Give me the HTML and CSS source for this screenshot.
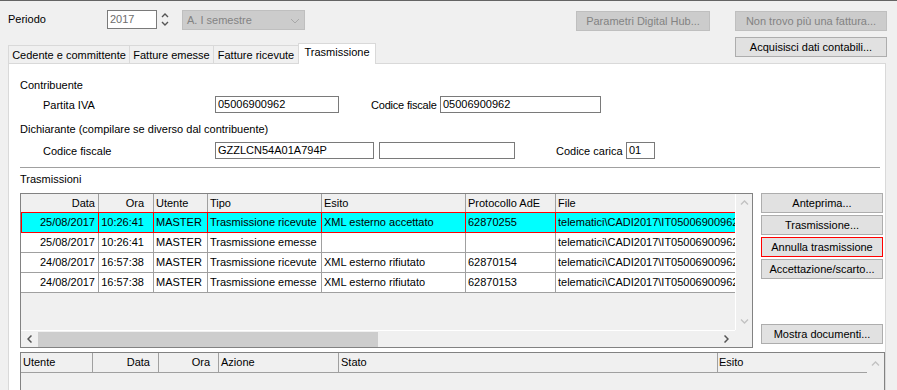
FILE: index.html
```html
<!DOCTYPE html>
<html lang="it">
<head>
    <meta charset="UTF-8">
    <title>Trasmissione</title>
    <link rel="stylesheet" href="styles.css">
</head>
<body>
    <div class="head">
        <div class="head-row">
            <span class="periodo">Periodo</span>
            <span class="year">2017</span>
            <span class="spin">
                <svg width="8" height="16" viewBox="0 0 8 16"><polyline points="1,6 4,3 7,6" fill="none" stroke="#555" stroke-width="1.4"/><polyline points="1,11 4,14 7,11" fill="none" stroke="#555" stroke-width="1.4"/></svg>
            </span>
            <span class="combo">A. I semestre
                <svg width="10" height="6" viewBox="0 0 10 6"><polyline points="1,1 5,5 9,1" fill="none" stroke="#a8a8a8" stroke-width="1"/></svg>
            </span>
            <span class="grow"></span>
            <button class="btn off w134">Parametri Digital Hub...</button>
            <button class="btn off w152 gap">Non trovo più una fattura...</button>
        </div>
        <div class="head-row2">
            <div class="tabs">
                <div class="tab t1">Cedente e committente</div>
                <div class="tab t2">Fatture emesse</div>
                <div class="tab t3">Fatture ricevute</div>
                <div class="tab active">Trasmissione</div>
            </div>
            <button class="btn acq">Acquisisci dati contabili...</button>
        </div>
    </div>

    <div class="panel">
        <div class="caption">Contribuente</div>
        <div class="row r1">
            <span class="lbl">Partita IVA</span>
            <span class="inp w124">05006900962</span>
            <span class="lbl-cf">Codice fiscale</span>
            <span class="inp w161">05006900962</span>
        </div>
        <div class="caption c2">Dichiarante (compilare se diverso dal contribuente)</div>
        <div class="row r2">
            <span class="lbl">Codice fiscale</span>
            <span class="inp w159">GZZLCN54A01A794P</span>
            <span class="inp w136"></span>
            <span class="lbl-cc">Codice carica</span>
            <span class="inp w29">01</span>
        </div>
        <div class="sep"></div>
        <div class="caption c3">Trasmissioni</div>

        <div class="gridwrap">
            <div class="grid">
                <div class="grid-body">
                    <div class="grid-main">
                        <div class="tr th">
                            <div class="td r">Data</div>
                            <div class="td r pr">Ora</div>
                            <div class="td">Utente</div>
                            <div class="td">Tipo</div>
                            <div class="td">Esito</div>
                            <div class="td">Protocollo AdE</div>
                            <div class="td">File</div>
                        </div>
                        <div class="tr sel">
                            <div class="td r">25/08/2017</div>
                            <div class="td r pr">10:26:41</div>
                            <div class="td">MASTER</div>
                            <div class="td">Trasmissione ricevute</div>
                            <div class="td">XML esterno accettato</div>
                            <div class="td">62870255</div>
                            <div class="td">telematici\CADI2017\IT05006900962</div>
                        </div>
                        <div class="tr">
                            <div class="td r">25/08/2017</div>
                            <div class="td r pr">10:26:41</div>
                            <div class="td">MASTER</div>
                            <div class="td">Trasmissione emesse</div>
                            <div class="td"></div>
                            <div class="td"></div>
                            <div class="td">telematici\CADI2017\IT05006900962</div>
                        </div>
                        <div class="tr">
                            <div class="td r">24/08/2017</div>
                            <div class="td r pr">16:57:38</div>
                            <div class="td">MASTER</div>
                            <div class="td">Trasmissione ricevute</div>
                            <div class="td">XML esterno rifiutato</div>
                            <div class="td">62870154</div>
                            <div class="td">telematici\CADI2017\IT05006900962</div>
                        </div>
                        <div class="tr">
                            <div class="td r">24/08/2017</div>
                            <div class="td r pr">16:57:38</div>
                            <div class="td">MASTER</div>
                            <div class="td">Trasmissione emesse</div>
                            <div class="td">XML esterno rifiutato</div>
                            <div class="td">62870153</div>
                            <div class="td">telematici\CADI2017\IT05006900962</div>
                        </div>
                    </div>
                    <div class="vscroll">
                        <svg width="9" height="5" viewBox="0 0 9 5"><polyline points="1,4.5 4.5,1 8,4.5" fill="none" stroke="#c2c2c2" stroke-width="1.3"/></svg>
                        <svg width="9" height="5" viewBox="0 0 9 5"><polyline points="1,0.5 4.5,4 8,0.5" fill="none" stroke="#c2c2c2" stroke-width="1.3"/></svg>
                    </div>
                </div>
                <div class="grid-foot">
                    <div class="hscroll">
                        <span class="arr"><svg width="5" height="8" viewBox="0 0 5 8"><polyline points="4.5,0.5 1,4 4.5,7.5" fill="none" stroke="#555" stroke-width="1.5"/></svg></span>
                        <span class="thumb"></span>
                        <span class="grow"></span>
                        <span class="arr"><svg width="5" height="8" viewBox="0 0 5 8"><polyline points="0.5,0.5 4,4 0.5,7.5" fill="none" stroke="#555" stroke-width="1.5"/></svg></span>
                    </div>
                    <div class="corner"></div>
                </div>
            </div>
            <div class="side">
                <button class="btn">Anteprima...</button>
                <button class="btn">Trasmissione...</button>
                <button class="btn focus">Annulla trasmissione</button>
                <button class="btn">Accettazione/scarto...</button>
                <button class="btn last">Mostra documenti...</button>
            </div>
        </div>

        <div class="grid2">
            <div class="grid2-main">
                <div class="tr2">
                    <div class="td">Utente</div>
                    <div class="td r pr">Data</div>
                    <div class="td r pr">Ora</div>
                    <div class="td">Azione</div>
                    <div class="td">Stato</div>
                    <div class="td nb">Esito</div>
                </div>
            </div>
            <div class="vscroll2">
                <svg width="9" height="5" viewBox="0 0 9 5"><polyline points="1,4.5 4.5,1 8,4.5" fill="none" stroke="#c2c2c2" stroke-width="1.3"/></svg>
            </div>
        </div>
    </div>
</body>
</html>
```

FILE: styles.css
```css
body {
    margin: 0;
    height: 390px;
    overflow: hidden;
    box-sizing: border-box;
    border-top: 1px solid #646464;
    background: #f0f0f0;
    font-family: "Liberation Sans", Arial, sans-serif;
    font-size: 11px;
    color: #000;
}
.head {
    padding: 9px 10px 0 8px;
}
.head-row {
    display: flex;
    align-items: flex-start;
    height: 21px;
}
.periodo {
    width: 99px;
    line-height: 19px;
}
.year {
    width: 50px;
    height: 19px;
    box-sizing: border-box;
    border: 1px solid #7a7a7a;
    background: #fff;
    color: #6d6d6d;
    padding-left: 2px;
    line-height: 17px;
}
.spin {
    width: 25px;
    box-sizing: border-box;
    padding: 1px 0 0 4px;
    display: flex;
}
.combo {
    width: 123px;
    height: 20px;
    box-sizing: border-box;
    background: #cccccc;
    border: 1px solid #bfbfbf;
    color: #838383;
    display: flex;
    align-items: center;
    justify-content: space-between;
    padding: 0 4px 0 4px;
}
.combo svg {
    margin-top: 2px;
}
.grow {
    flex: 1;
}
.btn {
    height: 20px;
    box-sizing: border-box;
    border: 1px solid #adadad;
    background: #e1e1e1;
    font: inherit;
    line-height: 16px;
    color: #000;
    padding: 0;
    margin: 0;
    white-space: nowrap;
}
.btn.off {
    background: #cccccc;
    border-color: #bfbfbf;
    color: #838383;
    margin-top: 1px;
}
.w134 { width: 134px; }
.w152 { width: 152px; }
.gap { margin-left: 25px; }

.head-row2 {
    display: flex;
    justify-content: space-between;
    height: 32px;
}
.tabs {
    align-self: flex-end;
    display: flex;
    align-items: flex-end;
    margin-bottom: -1px;
    position: relative;
    z-index: 1;
}
.tab {
    height: 19px;
    box-sizing: border-box;
    border: 1px solid #d9d9d9;
    background: #f0f0f0;
    line-height: 18px;
    text-align: center;
    margin-right: -1px;
    white-space: nowrap;
}
.t1 { width: 122px; }
.t2 { width: 85px; }
.t3 { width: 86px; }
.tab.active {
    width: 78px;
    height: 21px;
    background: #fff;
    border-bottom: none;
    line-height: 17px;
}
.acq {
    width: 152px;
    margin-top: 6px;
}

.panel {
    margin: 0 11px 0 8px;
    height: 327px;
    overflow: hidden;
    box-sizing: border-box;
    background: #fff;
    border: 1px solid #d9d9d9;
    border-bottom: none;
    padding: 14px 1px 0 11px;
}
.caption {
    line-height: 14px;
}
.c2 { margin-top: 9px; }
.c3 { margin-top: 4px; }
.row {
    display: flex;
    align-items: center;
    height: 17px;
    white-space: nowrap;
}
.r1 { margin-top: 4px; }
.r2 { margin-top: 6px; }
.lbl {
    width: 195px;
    box-sizing: border-box;
    padding-left: 23px;
}
.inp {
    flex-shrink: 0;
    height: 17px;
    box-sizing: border-box;
    border: 1px solid #7a7a7a;
    background: #fff;
    padding-left: 2px;
    line-height: 15px;
}
.w124 { width: 124px; }
.w161 { width: 161px; }
.w159 { width: 159px; }
.w136 { width: 136px; margin-left: 5px; }
.w29 { width: 29px; }
.lbl-cf {
    width: 69px;
    margin-left: 32px;
    letter-spacing: -0.2px;
}
.lbl-cc {
    width: 70px;
    margin-left: 41px;
}
.sep {
    height: 1px;
    background: #a0a0a0;
    margin: 8px 4px 0 0;
}

.gridwrap {
    display: flex;
    height: 155px;
    margin-top: 7px;
}
.grid {
    width: 733px;
    box-sizing: border-box;
    border: 1px solid #828282;
    display: flex;
    flex-direction: column;
}
.grid-body {
    flex: 1;
    display: flex;
    min-height: 0;
}
.grid-main {
    width: 714px;
    overflow: hidden;
    background: #f0f0f0;
}
.tr {
    display: grid;
    grid-template-columns: 78px 55px 54px 114px 144px 90px 260px;
    height: 20px;
    background: #fff;
}
.tr.th {
    height: 19px;
    background: #f0f0f0;
}
.td {
    box-sizing: border-box;
    border-right: 1px solid #a0a0a0;
    border-bottom: 1px solid #a0a0a0;
    padding: 0 2px 0 2px;
    line-height: 19px;
    white-space: nowrap;
    overflow: hidden;
}
.th .td {
    line-height: 18px;
}
.r { text-align: right; }
.pr { padding-right: 9px; }
.tr .r:first-child { padding-right: 3px; }
.tr.sel {
    margin-top: -1px;
    height: 21px;
    background: #00ffff;
}
.sel .td {
    border: 1px solid #ff0000;
    border-left: none;
    line-height: 19px;
}
.sel .td:first-child {
    border-left: 1px solid #ff0000;
}
.vscroll {
    width: 17px;
    box-sizing: border-box;
    border-left: 1px solid #fff;
    background: #f0f0f0;
    display: flex;
    flex-direction: column;
    align-items: center;
    justify-content: space-between;
    padding: 6px 0 6px 0;
}
.grid-foot {
    height: 17px;
    display: flex;
}
.hscroll {
    width: 714px;
    box-sizing: border-box;
    border-top: 1px solid #fff;
    background: #f0f0f0;
    display: flex;
    align-items: center;
}
.arr {
    width: 17px;
    display: flex;
    justify-content: center;
}
.thumb {
    width: 340px;
    height: 15px;
    background: #cdcdcd;
}
.corner {
    width: 17px;
    background: #f0f0f0;
}
.side {
    width: 122px;
    margin-left: 8px;
    display: flex;
    flex-direction: column;
    gap: 2px;
}
.btn.focus {
    border-color: #ff0000;
}
.btn.last {
    margin-top: auto;
    margin-bottom: 4px;
}

.grid2 {
    width: 865px;
    height: 38px;
    margin-top: 4px;
    box-sizing: border-box;
    border: 1px solid #828282;
    border-bottom: none;
    display: flex;
    background: #f0f0f0;
}
.grid2-main {
    width: 846px;
}
.tr2 {
    display: grid;
    grid-template-columns: 72px 66px 60px 120px 379px 149px;
    height: 20px;
}
.tr2 .td {
    line-height: 19px;
}
.tr2 .pr { padding-right: 8px; }
.tr2 .nb { border-right: none; padding-left: 1px; }
.vscroll2 {
    width: 17px;
    display: flex;
    justify-content: center;
    padding-top: 8px;
    box-sizing: border-box;
}
```
